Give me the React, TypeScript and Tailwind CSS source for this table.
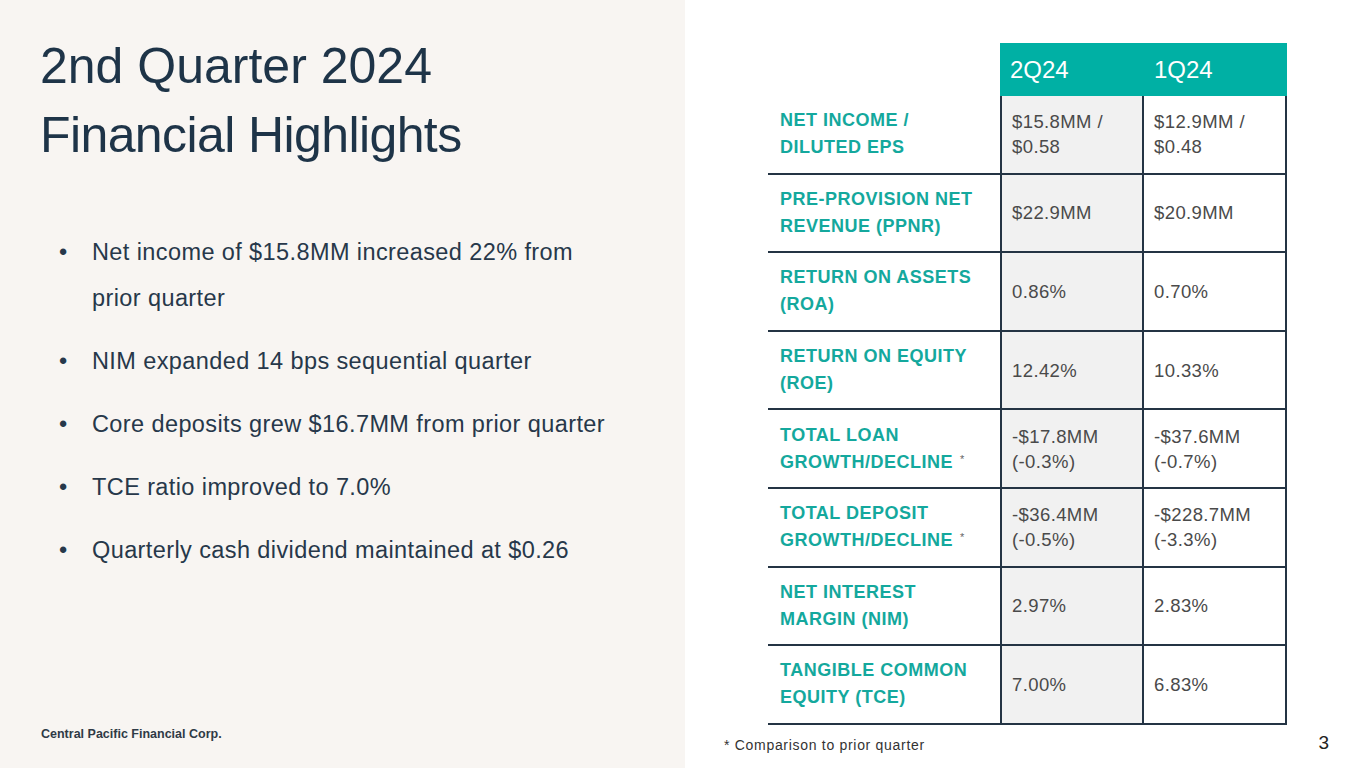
import React from 'react';

const rows = [
  { label: ['NET INCOME /', 'DILUTED EPS'], a: ['$15.8MM /', '$0.58'], b: ['$12.9MM /', '$0.48'] },
  { label: ['PRE-PROVISION NET', 'REVENUE (PPNR)'], a: ['$22.9MM'], b: ['$20.9MM'] },
  { label: ['RETURN ON ASSETS', '(ROA)'], a: ['0.86%'], b: ['0.70%'] },
  { label: ['RETURN ON EQUITY', '(ROE)'], a: ['12.42%'], b: ['10.33%'] },
  { label: ['TOTAL LOAN', 'GROWTH/DECLINE'], a: ['-$17.8MM', '(-0.3%)'], b: ['-$37.6MM', '(-0.7%)'], star: true },
  { label: ['TOTAL DEPOSIT', 'GROWTH/DECLINE'], a: ['-$36.4MM', '(-0.5%)'], b: ['-$228.7MM', '(-3.3%)'], star: true },
  { label: ['NET INTEREST', 'MARGIN (NIM)'], a: ['2.97%'], b: ['2.83%'] },
  { label: ['TANGIBLE COMMON', 'EQUITY (TCE)'], a: ['7.00%'], b: ['6.83%'] },
];

const bullets = [
  ['Net income of $15.8MM increased 22% from', 'prior quarter'],
  ['NIM expanded 14 bps sequential quarter'],
  ['Core deposits grew $16.7MM from prior quarter'],
  ['TCE ratio improved to 7.0%'],
  ['Quarterly cash dividend maintained at $0.26'],
];

export default function App() {
  return (
    <div className="flex h-[768px] w-[1365px] overflow-hidden bg-white" style={{ fontFamily: '"Liberation Sans", Arial, sans-serif' }}>
      {/* left panel */}
      <div className="flex w-[685px] shrink-0 flex-col bg-[#f8f5f2] pl-10">
        <h1 className="mt-[32px] text-[50px] font-normal leading-[69px] text-[#1e3448]">
          2nd Quarter 2024
          <br />
          <span className="tracking-[-0.6px]">Financial Highlights</span>
        </h1>
        <ul className="mt-[59px] flex flex-col gap-[17px] text-[23.5px] leading-[46px] tracking-[0.4px] text-[#27384a]">
          {bullets.map((b) => (
            <li key={b[0]} className="flex">
              <span className="w-[52px] shrink-0 pl-[19px]">•</span>
              <span>
                {b.map((line, j) => (
                  <div key={j}>{line}</div>
                ))}
              </span>
            </li>
          ))}
        </ul>
        <div className="mt-auto mb-[24px] pl-[1px] text-[12.5px] font-bold text-[#2f3a46]">Central Pacific Financial Corp.</div>
      </div>

      {/* right panel */}
      <div className="flex flex-1 flex-col pl-[83px] pt-[43px]">
        <div className="w-[519px]">
          <div className="flex h-[53px]">
            <div className="w-[232px]" />
            <div className="flex w-[287px] items-center bg-[#00b0a4] text-[24px] text-white">
              <div className="w-[144px] pl-[10px]">2Q24</div>
              <div className="pl-[10px]">1Q24</div>
            </div>
          </div>
          {rows.map((r, i) => (
            <div key={i} className="flex h-[78.6px] border-b-2 border-[#243444]">
              <div className="flex w-[232px] flex-col justify-center pl-[12px] text-[18px] font-bold leading-[27px] tracking-[0.5px] text-[#14a89d]">
                <div>{r.label[0]}</div>
                <div className="flex items-start">
                  {r.label[1]}
                  {r.star && <span className="ml-[7px] mt-[-3px] text-[11px] font-normal text-[#666]">*</span>}
                </div>
              </div>
              <div className="flex w-[144px] flex-col justify-center border-x-2 border-[#243444] bg-[#f1f1f1] pl-[10px] text-[18.5px] leading-[25px] tracking-[0.4px] text-[#4a4a4a]">
                {r.a.map((t) => (
                  <div key={t}>{t}</div>
                ))}
              </div>
              <div className="flex w-[143px] flex-col justify-center border-r-2 border-[#243444] pl-[10px] text-[18.5px] leading-[25px] tracking-[0.4px] text-[#4a4a4a]">
                {r.b.map((t) => (
                  <div key={t}>{t}</div>
                ))}
              </div>
            </div>
          ))}
        </div>
        <div className="mt-[10px] flex w-[561px] items-start justify-between">
          <div className="-ml-[44px] text-[14px] tracking-[0.7px] text-[#333]">* Comparison to prior quarter</div>
          <div className="mt-[-6px] text-[19px] text-[#222]">3</div>
        </div>
      </div>
    </div>
  );
}
